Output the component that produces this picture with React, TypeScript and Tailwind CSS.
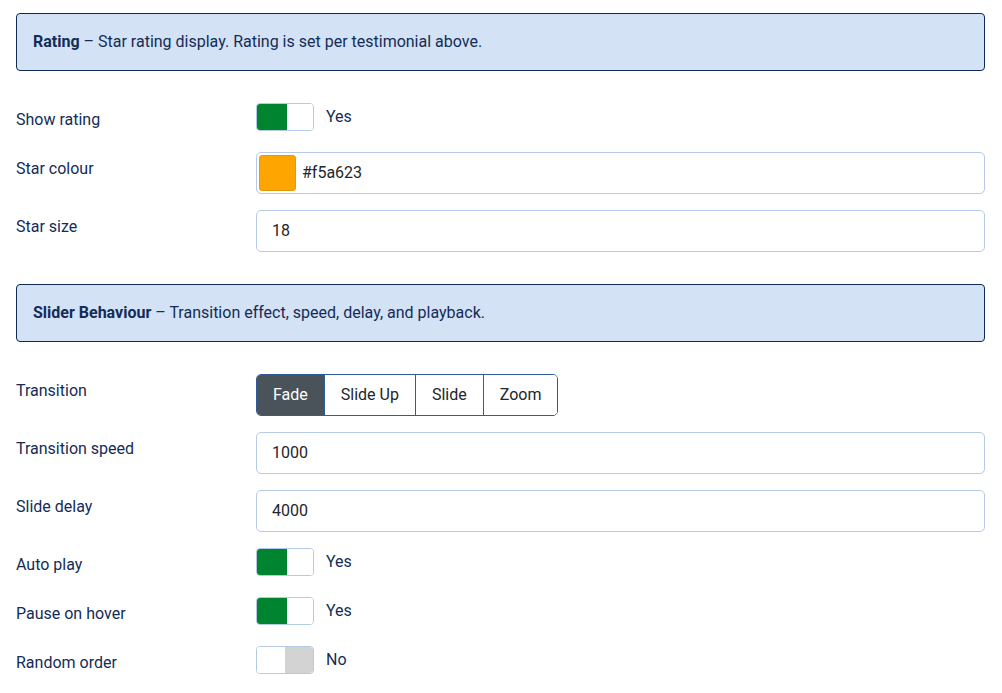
import React from "react";

const navy = "text-[#142c57]";

function Banner({ title, text }: { title: string; text: string }) {
  return (
    <div className={`flex h-[58px] items-center rounded-[4px] border border-[#0f2b52] bg-[#d3e2f4] px-4 text-[16px] ${navy}`}>
      <p>
        <strong className="font-bold">{title}</strong> – {text}
      </p>
    </div>
  );
}

function Row({ label, children }: { label: string; children: React.ReactNode }) {
  return (
    <div className="mb-4 flex">
      <div className={`w-[240px] shrink-0 pt-[5px] text-[16px] leading-6 ${navy}`}>{label}</div>
      <div className="flex-1">{children}</div>
    </div>
  );
}

function Toggle({ on }: { on: boolean }) {
  return (
    <div className="flex h-[33px] items-start">
      <div className="flex h-[28px] w-[58px] overflow-hidden rounded-[4px] border border-[#b4c9e6]">
        {on ? (
          <>
            <span className="w-[30px] bg-[#00842f]" />
            <span className="flex-1 bg-white" />
          </>
        ) : (
          <>
            <span className="w-[28px] bg-white" />
            <span className="flex-1 bg-[#d3d3d3]" />
          </>
        )}
      </div>
      <span className={`ml-3 text-[16px] leading-[27px] ${navy}`}>{on ? "Yes" : "No"}</span>
    </div>
  );
}

function TextInput({ value }: { value: string }) {
  return (
    <div className="flex h-[42px] items-center rounded-[5px] border border-[#b6c9e6] bg-white px-[15px] text-[16px] text-[#22262a]">
      {value}
    </div>
  );
}

function ColourInput({ value }: { value: string }) {
  return (
    <div className="flex h-[42px] items-center rounded-[5px] border border-[#b6c9e6] bg-white pl-[2px] text-[16px] text-[#22262a]">
      <span className="h-[36px] w-[37px] rounded-[3px] border border-[#e09a10] bg-[#ffa500]" />
      <span className="ml-[6px]">{value}</span>
    </div>
  );
}

function Segmented({ options, active }: { options: string[]; active: string }) {
  return (
    <div className="inline-flex h-[42px] overflow-hidden rounded-[5px] border border-[#2f5c97]">
      {options.map((o, i) => (
        <span
          key={o}
          className={`flex items-center px-4 text-[16px] ${i > 0 ? "border-l border-[#2f5c97]" : ""} ${
            o === active ? "bg-[#4a525a] text-white" : "bg-white text-[#22262a]"
          }`}
        >
          {o}
        </span>
      ))}
    </div>
  );
}

export default function App() {
  return (
    <main className="min-h-screen bg-white pl-4 pr-[17px] pt-[13px] font-['Roboto',sans-serif]">
      <Banner title="Rating" text="Star rating display. Rating is set per testimonial above." />
      <div className="mt-8">
        <Row label="Show rating">
          <Toggle on />
        </Row>
        <Row label="Star colour">
          <ColourInput value="#f5a623" />
        </Row>
        <Row label="Star size">
          <TextInput value="18" />
        </Row>
      </div>

      <div className="mt-8">
        <Banner title="Slider Behaviour" text="Transition effect, speed, delay, and playback." />
      </div>
      <div className="mt-8">
        <Row label="Transition">
          <Segmented options={["Fade", "Slide Up", "Slide", "Zoom"]} active="Fade" />
        </Row>
        <Row label="Transition speed">
          <TextInput value="1000" />
        </Row>
        <Row label="Slide delay">
          <TextInput value="4000" />
        </Row>
        <Row label="Auto play">
          <Toggle on />
        </Row>
        <Row label="Pause on hover">
          <Toggle on />
        </Row>
        <Row label="Random order">
          <Toggle on={false} />
        </Row>
      </div>
    </main>
  );
}
